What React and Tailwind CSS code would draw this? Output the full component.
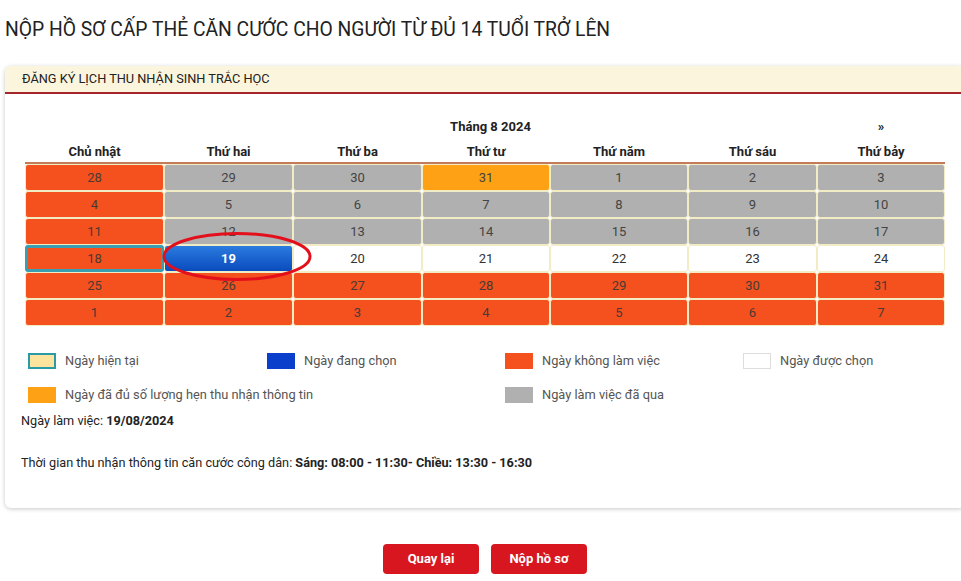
import React from 'react';

const ORANGE = 'bg-[#f4511e]';
const GRAY = 'bg-[#b0b0b0]';

const dayNames = ['Chủ nhật', 'Thứ hai', 'Thứ ba', 'Thứ tư', 'Thứ năm', 'Thứ sáu', 'Thứ bảy'];

// o = nghỉ, g = đã qua, f = đủ, t = hôm nay, s = đang chọn, w = được chọn
const weeks = [
    [[28, 'o'], [29, 'g'], [30, 'g'], [31, 'f'], [1, 'g'], [2, 'g'], [3, 'g']],
    [[4, 'o'], [5, 'g'], [6, 'g'], [7, 'g'], [8, 'g'], [9, 'g'], [10, 'g']],
    [[11, 'o'], [12, 'g'], [13, 'g'], [14, 'g'], [15, 'g'], [16, 'g'], [17, 'g']],
    [[18, 't'], [19, 's'], [20, 'w'], [21, 'w'], [22, 'w'], [23, 'w'], [24, 'w']],
    [[25, 'o'], [26, 'o'], [27, 'o'], [28, 'o'], [29, 'o'], [30, 'o'], [31, 'o']],
    [[1, 'o'], [2, 'o'], [3, 'o'], [4, 'o'], [5, 'o'], [6, 'o'], [7, 'o']],
];

const cellClass = {
    o: `${ORANGE} text-[#4a3a35] border border-[#f1ecc4]`,
    g: `${GRAY} text-[#444] border border-[#f1ecc4]`,
    f: 'bg-[#ffa114] text-[#444] border border-[#f1ecc4]',
    t: `${ORANGE} text-[#4a3a35] border-[3px] border-[#3a9db0]`,
    s: 'bg-gradient-to-b from-[#2b7be0] to-[#0b4bbd] text-white font-bold border border-[#f1ecc4]',
    w: 'bg-white text-[#333] border border-[#f1ecc4]',
};

const cols = 'grid grid-cols-[139px_129px_129px_128px_138px_129px_128px]';

const Legend = ({ box, label, className = '' }) => (
    <div className={`flex items-center gap-[9px] h-[18px] ${className}`}>
        <span className={`w-[28px] h-[16px] shrink-0 ${box}`}></span>
        <span>{label}</span>
    </div>
);

const App = () => {
    return (
        <div className="w-[961px] h-[581px] overflow-hidden bg-white font-['Roboto',sans-serif]">
            <div className="ml-[5px] w-[960px]">
                {/* Title */}
                <h1 className="pt-[16px] text-[19.3px] leading-[28px] text-[#222] font-normal">
                    NỘP HỒ SƠ CẤP THẺ CĂN CƯỚC CHO NGƯỜI TỪ ĐỦ 14 TUỔI TRỞ LÊN
                </h1>

                {/* Card */}
                <div className="mt-[22px] rounded-md shadow-[0_1px_4px_rgba(0,0,0,0.22)] bg-white">
                    <div className="h-[28px] bg-[#fcf5dd] border-b-2 border-[#a4262c] rounded-t-md px-[17px] flex items-center text-[12.75px] text-[#222]">
                        ĐĂNG KÝ LỊCH THU NHẬN SINH TRẮC HỌC
                    </div>

                    <div className="px-[20px] pt-[22px] pb-[36px]">
                        {/* Calendar */}
                        <div className="text-[13px] text-[#222]">
                            <div className={`${cols} h-[22px] items-center font-bold`}>
                                <div></div>
                                <div className="col-span-5 text-center">Tháng 8 2024</div>
                                <div className="text-center">»</div>
                            </div>
                            <div className={`${cols} h-[26px] pt-[4px] items-center font-bold border-b-2 border-[#c47b5a]`}>
                                {dayNames.map(d => (
                                    <div key={d} className="text-center">{d}</div>
                                ))}
                            </div>
                            <div className="relative">
                                {weeks.map((week, i) => (
                                    <div key={i} className={`${cols} h-[27px]`}>
                                        {week.map(([n, t], j) => (
                                            <div
                                                key={j}
                                                className={`flex items-center justify-center rounded-[3px] ${cellClass[t]}`}
                                            >
                                                {n}
                                            </div>
                                        ))}
                                    </div>
                                ))}
                                {/* annotation */}
                                <svg className="absolute left-[135px] top-[67px] pointer-events-none" width="154" height="52" viewBox="0 0 154 52">
                                    <ellipse cx="77" cy="25.5" rx="73" ry="23" fill="none" stroke="#e3101c" strokeWidth="3" />
                                </svg>
                            </div>
                        </div>

                        {/* Legend */}
                        <div className="mt-[26px] ml-[3px] text-[12.8px] text-[#555] grid grid-cols-[239px_238px_238px_1fr] gap-y-[16px]">
                            <Legend box="bg-[#fde49e] border-2 border-[#2a9aa6]" label="Ngày hiện tại" />
                            <Legend box="bg-[#0a3fcc]" label="Ngày đang chọn" />
                            <Legend box="bg-[#f4511e]" label="Ngày không làm việc" />
                            <Legend box="bg-white border border-[#ddd]" label="Ngày được chọn" />
                            <Legend box="bg-[#ffa114]" label="Ngày đã đủ số lượng hẹn thu nhận thông tin" className="col-span-2" />
                            <Legend box="bg-[#b0b0b0]" label="Ngày làm việc đã qua" />
                        </div>

                        <div className="mt-[8px] -ml-[4px] text-[12.7px] text-[#222] leading-[18px]">
                            <p>Ngày làm việc: <span className="font-bold">19/08/2024</span></p>
                            <p className="mt-[24px]">
                                Thời gian thu nhận thông tin căn cước công dân: <span className="font-bold">Sáng: 08:00 - 11:30- Chiều: 13:30 - 16:30</span>
                            </p>
                        </div>
                    </div>
                </div>

                {/* Buttons */}
                <div className="mt-[36px] flex justify-center gap-[12px]">
                    <button className="w-[96px] h-[30px] rounded-[4px] bg-[#d7161f] text-white text-[13px] font-bold">
                        Quay lại
                    </button>
                    <button className="w-[96px] h-[30px] rounded-[4px] bg-[#d7161f] text-white text-[13px] font-bold">
                        Nộp hồ sơ
                    </button>
                </div>
            </div>
        </div>
    );
};

export default App;
